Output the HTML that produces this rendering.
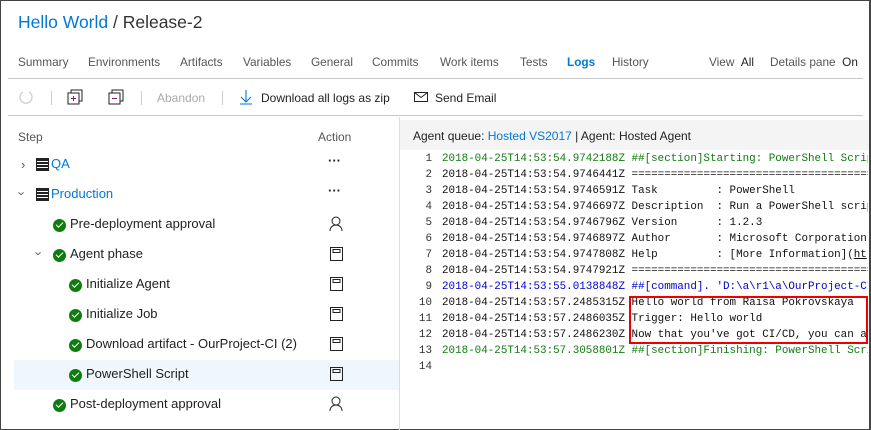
<!DOCTYPE html>
<html><head><meta charset="utf-8"><style>
*{margin:0;padding:0;box-sizing:border-box}
body{width:871px;height:430px;overflow:hidden;background:#fff;font-family:"Liberation Sans",sans-serif;position:relative;color:#222}
.frame{position:absolute;left:0;top:0;width:871px;height:430px;border:1px solid #444;border-right:none}
.abs{position:absolute;white-space:nowrap}
.title{left:18px;top:12px;font-size:17.5px;color:#333}
.title .b{color:#0078d7}
.tab{top:55px;font-size:11.8px;color:#555}
.hr{position:absolute;left:8px;width:855px;height:1px;background:#c8c8c8}
.tb{top:91px;font-size:12px;color:#222}
.sep{position:absolute;top:91px;width:1px;height:14px;background:#ccc}
.step{font-size:13px;color:#222}
.chk{position:absolute;width:13px;height:13px;border-radius:50%;background:#107c10}
.chk:after{content:"";position:absolute;left:3px;top:3px;width:6px;height:3px;border-left:1.6px solid #fff;border-bottom:1.6px solid #fff;transform:rotate(-45deg)}
.mono{position:absolute;left:400px;top:0;width:468px;height:430px;overflow:hidden;font-family:"Liberation Mono",monospace;font-size:10.9px;line-height:14px}
.ln{position:absolute;left:0;width:32px;text-align:right;color:#333;white-space:pre}
.lt{position:absolute;left:42px;color:#111;white-space:pre}
.g{color:#107c10}.bl{color:#0000cc}
</style></head><body>
<div class="frame"></div>
<div class="abs title"><span class="b">Hello World</span> / Release-2</div>
<div class="abs tab" style="left:18px">Summary</div>
<div class="abs tab" style="left:88px">Environments</div>
<div class="abs tab" style="left:180px">Artifacts</div>
<div class="abs tab" style="left:243px">Variables</div>
<div class="abs tab" style="left:311px">General</div>
<div class="abs tab" style="left:372px">Commits</div>
<div class="abs tab" style="left:440px">Work items</div>
<div class="abs tab" style="left:520px">Tests</div>
<div class="abs tab" style="left:567px;color:#0078d7;font-weight:bold">Logs</div>
<div class="abs tab" style="left:612px">History</div>
<div class="abs tab" style="left:709px">View <span style="color:#222">&nbsp;All</span></div>
<div class="abs tab" style="left:770px">Details pane <span style="color:#222">&nbsp;On</span></div>
<div class="hr" style="top:78px"></div>
<div class="hr" style="top:115px"></div>
<svg class="abs" style="left:18px;top:89px" width="16" height="16"><path d="M11 3 A6 6 0 1 1 5 3" fill="none" stroke="#ccc" stroke-width="1.2"/></svg>
<div class="sep" style="left:51px"></div>
<svg class="abs" style="left:67px;top:89px" width="16" height="16"><rect x="4" y="1" width="11" height="11" fill="none" stroke="#222"/><rect x="1" y="4" width="11" height="11" fill="#fff" stroke="#222"/><path d="M6.5 7v5M4 9.5h5" stroke="#7a1a7a"/></svg>
<svg class="abs" style="left:108px;top:89px" width="16" height="16"><rect x="4" y="1" width="11" height="11" fill="none" stroke="#222"/><rect x="1" y="4" width="11" height="11" fill="#fff" stroke="#222"/><path d="M4 9.5h5" stroke="#7a1a7a"/></svg>
<div class="sep" style="left:141px"></div>
<div class="abs tb" style="left:157px;color:#aaa">Abandon</div>
<div class="sep" style="left:222px"></div>
<svg class="abs" style="left:239px;top:89px" width="14" height="16"><path d="M7 1v12M2 8l5 5 5-5M1 15h12" fill="none" stroke="#0078d7" stroke-width="1.1"/></svg>
<div class="abs tb" style="left:261px">Download all logs as zip</div>
<svg class="abs" style="left:414px;top:92px" width="15" height="11"><rect x=".5" y=".5" width="13" height="9" fill="none" stroke="#222"/><path d="M.5 .5l6.5 5 6.5-5" fill="none" stroke="#222"/></svg>
<div class="abs tb" style="left:435px">Send Email</div>

<div class="abs" style="left:18px;top:130px;font-size:12px;color:#555">Step</div>
<div class="abs" style="left:318px;top:130px;font-size:12px;color:#555">Action</div>
<div class="abs" style="left:14px;top:360px;width:385px;height:30px;background:#eff6fc"></div>
<div class="abs" style="left:399px;top:117px;width:1px;height:313px;background:#ddd"></div>

<div class="abs step" style="left:21px;top:157px;color:#555">›</div>
<svg class="abs" style="left:36px;top:158px" width="13" height="13"><rect width="13" height="13" fill="#222"/><path d="M1 3.5h11M1 6.5h11M1 9.5h11" stroke="#fff"/></svg>
<div class="abs step" style="left:51px;top:156px;color:#0078d7">QA</div>
<div class="abs step" style="left:328px;top:153px;font-weight:bold">···</div>
<div class="abs step" style="left:20px;top:186px;color:#555;transform:rotate(90deg)">›</div>
<svg class="abs" style="left:36px;top:188px" width="13" height="13"><rect width="13" height="13" fill="#222"/><path d="M1 3.5h11M1 6.5h11M1 9.5h11" stroke="#fff"/></svg>
<div class="abs step" style="left:51px;top:186px;color:#0078d7">Production</div>
<div class="abs step" style="left:328px;top:183px;font-weight:bold">···</div>

<div class="chk" style="left:53px;top:219px"></div><div class="abs step" style="left:70px;top:216px">Pre-deployment approval</div>
<div class="abs step" style="left:37px;top:246px;color:#555;transform:rotate(90deg)">›</div>
<div class="chk" style="left:53px;top:249px"></div><div class="abs step" style="left:70px;top:246px">Agent phase</div>
<div class="chk" style="left:69px;top:279px"></div><div class="abs step" style="left:86px;top:276px">Initialize Agent</div>
<div class="chk" style="left:69px;top:309px"></div><div class="abs step" style="left:86px;top:306px">Initialize Job</div>
<div class="chk" style="left:69px;top:339px"></div><div class="abs step" style="left:86px;top:336px">Download artifact - OurProject-CI (2)</div>
<div class="chk" style="left:69px;top:369px"></div><div class="abs step" style="left:86px;top:366px">PowerShell Script</div>
<div class="chk" style="left:53px;top:399px"></div><div class="abs step" style="left:70px;top:396px">Post-deployment approval</div>

<svg class="abs" style="left:329px;top:216px" width="14" height="16"><circle cx="7" cy="5" r="4" fill="none" stroke="#222"/><path d="M1 15c0-4 3-6 6-6s6 2 6 6" fill="none" stroke="#222"/></svg>
<svg class="abs" style="left:329px;top:396px" width="14" height="16"><circle cx="7" cy="5" r="4" fill="none" stroke="#222"/><path d="M1 15c0-4 3-6 6-6s6 2 6 6" fill="none" stroke="#222"/></svg>
<svg class="abs" style="left:330px;top:247px" width="14" height="14"><rect x=".5" y=".5" width="12" height="13" fill="none" stroke="#222"/><rect x="3" y="2.5" width="7" height="3" fill="none" stroke="#222"/></svg>
<svg class="abs" style="left:330px;top:277px" width="14" height="14"><rect x=".5" y=".5" width="12" height="13" fill="none" stroke="#222"/><rect x="3" y="2.5" width="7" height="3" fill="none" stroke="#222"/></svg>
<svg class="abs" style="left:330px;top:307px" width="14" height="14"><rect x=".5" y=".5" width="12" height="13" fill="none" stroke="#222"/><rect x="3" y="2.5" width="7" height="3" fill="none" stroke="#222"/></svg>
<svg class="abs" style="left:330px;top:337px" width="14" height="14"><rect x=".5" y=".5" width="12" height="13" fill="none" stroke="#222"/><rect x="3" y="2.5" width="7" height="3" fill="none" stroke="#222"/></svg>
<svg class="abs" style="left:330px;top:367px" width="14" height="14"><rect x=".5" y=".5" width="12" height="13" fill="none" stroke="#222"/><rect x="3" y="2.5" width="7" height="3" fill="none" stroke="#222"/></svg>

<div class="abs" style="left:400px;top:120px;width:471px;height:30px;background:#f4f4f4"></div>
<div class="abs" style="left:413px;top:129px;font-size:12px;color:#222">Agent queue: <span style="color:#0078d7">Hosted VS2017</span> | Agent: Hosted Agent</div>

<div class="mono">
<div class="ln" style="top:152px">1</div><div class="lt g" style="top:152px">2018-04-25T14:53:54.9742188Z ##[section]Starting: PowerShell Script</div>
<div class="ln" style="top:168px">2</div><div class="lt" style="top:168px">2018-04-25T14:53:54.9746441Z ==========================================</div>
<div class="ln" style="top:184px">3</div><div class="lt" style="top:184px">2018-04-25T14:53:54.9746591Z Task         : PowerShell</div>
<div class="ln" style="top:200px">4</div><div class="lt" style="top:200px">2018-04-25T14:53:54.9746697Z Description  : Run a PowerShell script</div>
<div class="ln" style="top:216px">5</div><div class="lt" style="top:216px">2018-04-25T14:53:54.9746796Z Version      : 1.2.3</div>
<div class="ln" style="top:232px">6</div><div class="lt" style="top:232px">2018-04-25T14:53:54.9746897Z Author       : Microsoft Corporation</div>
<div class="ln" style="top:248px">7</div><div class="lt" style="top:248px">2018-04-25T14:53:54.9747808Z Help         : [More Information](<u>ht</u></div>
<div class="ln" style="top:264px">8</div><div class="lt" style="top:264px">2018-04-25T14:53:54.9747921Z ==========================================</div>
<div class="ln" style="top:280px">9</div><div class="lt bl" style="top:280px">2018-04-25T14:53:55.0138848Z ##[command]. 'D:\a\r1\a\OurProject-CI'</div>
<div class="ln" style="top:296px">10</div><div class="lt" style="top:296px">2018-04-25T14:53:57.2485315Z Hello world from Raisa Pokrovskaya</div>
<div class="ln" style="top:312px">11</div><div class="lt" style="top:312px">2018-04-25T14:53:57.2486035Z Trigger: Hello world</div>
<div class="ln" style="top:328px">12</div><div class="lt" style="top:328px">2018-04-25T14:53:57.2486230Z Now that you've got CI/CD, you can add</div>
<div class="ln" style="top:344px">13</div><div class="lt g" style="top:344px">2018-04-25T14:53:57.3058801Z ##[section]Finishing: PowerShell Script</div>
<div class="ln" style="top:360px">14</div>
</div>
<div class="abs" style="left:629px;top:296px;width:239px;height:48px;border:2px solid #e00"></div>
<div class="abs" style="left:869px;top:0;width:2px;height:430px;background:#444"></div>
</body></html>
